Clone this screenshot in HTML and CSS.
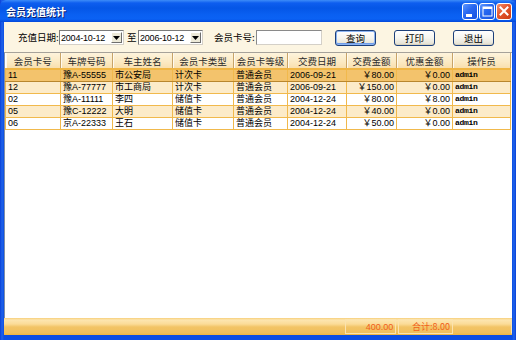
FILE: index.html
```html
<!DOCTYPE html>
<html lang="zh">
<head>
<meta charset="utf-8">
<link rel="stylesheet" href="styles.css">
</head>
<body>
<div class="window">
  <div class="titlebar">
    <span class="title">会员充值统计</span>
    <div class="tbtns">
      <span class="tb"><svg width="14" height="15" viewBox="0 0 14 15"><rect x="3" y="10" width="6" height="3" fill="#fff"/></svg></span>
      <span class="tb"><svg width="14" height="15" viewBox="0 0 14 15"><rect x="3" y="3" width="9" height="9" fill="none" stroke="#fff" stroke-width="1"/><rect x="3" y="3" width="9" height="2" fill="#fff"/></svg></span>
      <span class="tb close"><svg width="14" height="15" viewBox="0 0 14 15"><path d="M3.5 3.5 L10.5 10.5 M10.5 3.5 L3.5 10.5" stroke="#fff" stroke-width="2" stroke-linecap="square"/></svg></span>
    </div>
  </div>
  <div class="client">
    <div class="toolbar">
      <span class="lbl lbl-date">充值日期:</span>
      <div class="combo"><span class="val">2004-10-12</span><span class="drop"><svg width="7" height="4" viewBox="0 0 7 4"><path d="M0 0 H7 L3.5 4 Z" fill="#000"/></svg></span></div>
      <span class="lbl lbl-to">至</span>
      <div class="combo"><span class="val">2006-10-12</span><span class="drop"><svg width="7" height="4" viewBox="0 0 7 4"><path d="M0 0 H7 L3.5 4 Z" fill="#000"/></svg></span></div>
      <span class="lbl lbl-card">会员卡号:</span>
      <div class="input"></div>
      <button class="btn btn-query">查询</button>
      <button class="btn btn-print">打印</button>
      <button class="btn btn-exit">退出</button>
    </div>
    <div class="grid">
      <table>
        <colgroup>
          <col class="c1"><col class="c2"><col class="c3"><col class="c4"><col class="c5"><col class="c6"><col class="c7"><col class="c8"><col class="c9">
        </colgroup>
        <thead>
          <tr><th>会员卡号</th><th>车牌号码</th><th>车主姓名</th><th>会员卡类型</th><th>会员卡等级</th><th>交费日期</th><th>交费金额</th><th>优惠金额</th><th>操作员</th></tr>
        </thead>
        <tbody>
          <tr class="sel"><td>11</td><td>豫A-55555</td><td>市公安局</td><td>计次卡</td><td>普通会员</td><td>2006-09-21</td><td class="num">￥80.00</td><td class="num">￥0.00</td><td class="op">admin</td></tr>
          <tr class="alt"><td>12</td><td>豫A-77777</td><td>市工商局</td><td>计次卡</td><td>普通会员</td><td>2006-09-21</td><td class="num">￥150.00</td><td class="num">￥0.00</td><td class="op">admin</td></tr>
          <tr><td>02</td><td>豫A-11111</td><td>李四</td><td>储值卡</td><td>普通会员</td><td>2004-12-24</td><td class="num">￥80.00</td><td class="num">￥8.00</td><td class="op">admin</td></tr>
          <tr class="alt"><td>05</td><td>豫C-12222</td><td>大明</td><td>储值卡</td><td>普通会员</td><td>2004-12-24</td><td class="num">￥40.00</td><td class="num">￥0.00</td><td class="op">admin</td></tr>
          <tr><td>06</td><td>京A-22333</td><td>王石</td><td>储值卡</td><td>普通会员</td><td>2004-12-24</td><td class="num">￥50.00</td><td class="num">￥0.00</td><td class="op">admin</td></tr>
        </tbody>
      </table>
    </div>
    <div class="status">
      <div class="sp sp-fill"></div>
      <div class="sp sp-sum">400.00</div>
      <div class="sp sp-total">合计:8.00</div>
      <div class="sp sp-end"></div>
    </div>
  </div>
</div>
</body>
</html>
```

FILE: styles.css
```css
html, body {
  margin: 0;
  padding: 0;
  width: 516px;
  height: 340px;
  overflow: hidden;
  background: #fff;
}
.window {
  width: 516px;
  height: 340px;
  display: flex;
  flex-direction: column;
  background: linear-gradient(to right, #0a3fd8 0, #1f63ea 2px, #0c4ee3 4px, #0c4ee3 512px, #1f63ea 514px, #0a3fd8 516px);
  font-family: "Liberation Sans", "Noto Sans CJK SC", sans-serif;
}
.titlebar {
  height: 22px;
  flex: none;
  display: flex;
  align-items: center;
  justify-content: space-between;
  background: linear-gradient(to bottom, #3d8cf8 0, #0e5eef 3px, #0556e6 8px, #0a60f2 15px, #0b62f4 19px, #0550e3 21px, #0446d8 22px);
  border-radius: 6px 6px 0 0;
}
.title {
  margin-left: 6px;
  color: #fff;
  font-family: "Noto Sans CJK SC", sans-serif;
  font-weight: bold;
  font-size: 10px;
  letter-spacing: 0;
  text-shadow: 1px 1px 0 #0a1f70;
}
.tbtns {
  display: flex;
  gap: 1px;
  margin-right: 4px;
  margin-top: 1px;
}
.tb {
  width: 16px;
  height: 17px;
  box-sizing: border-box;
  border: 1px solid #fff;
  border-radius: 3px;
  background: linear-gradient(135deg, #5d97ff 0%, #2767f0 45%, #1751e2 100%);
  display: flex;
  align-items: center;
  justify-content: center;
}
.tb.close {
  background: linear-gradient(135deg, #f4906e 0%, #e4562e 45%, #cc3a12 100%);
}
.client {
  flex: 1;
  margin: 0 4px 5px 4px;
  display: flex;
  flex-direction: column;
  background: #fcf5e2;
}
.toolbar {
  height: 30px;
  flex: none;
  display: flex;
  align-items: flex-start;
  padding-top: 8px;
  box-sizing: border-box;
  font-size: 9.5px;
  color: #000;
}
.lbl {
  font-family: "Noto Sans CJK SC", sans-serif;
  font-size: 9.5px;
  line-height: 15px;
  height: 15px;
}
.lbl-date { margin-left: 14px; width: 41px; }
.lbl-to { margin-left: 3px; width: 11px; }
.lbl-card { margin-left: 11px; width: 42px; }
.combo {
  width: 65px;
  height: 15px;
  box-sizing: border-box;
  border: 1px solid #7b7b7b;
  border-right-color: #d4d0c8;
  border-bottom-color: #d4d0c8;
  background: #fff;
  display: flex;
  align-items: center;
  justify-content: space-between;
}
.combo .val {
  font-size: 9px;
  padding-left: 1px;
  letter-spacing: -0.2px;
}
.drop {
  width: 11px;
  height: 11px;
  margin-right: 1px;
  box-sizing: border-box;
  background: #ece9d8;
  border: 1px solid;
  border-color: #fff #6e6e6e #6e6e6e #fff;
  display: flex;
  align-items: center;
  justify-content: center;
}
.input {
  width: 66px;
  height: 15px;
  box-sizing: border-box;
  border: 1px solid #8a8a8a;
  border-right-color: #d4d0c8;
  border-bottom-color: #d4d0c8;
  background: #fff;
}
.btn {
  width: 41px;
  height: 16px;
  padding: 0;
  box-sizing: border-box;
  border: 1px solid #1c3f7a;
  border-radius: 3px;
  background: linear-gradient(to bottom, #ffffff 0%, #f6f5ef 50%, #e6e3d6 90%, #d6d0c0 100%);
  box-shadow: inset 0 -1px 0 #d8d2bd;
  font-family: "Noto Sans CJK SC", sans-serif;
  font-size: 9.5px;
  line-height: 13px;
  color: #000;
}
.btn-query {
  margin-left: 13px;
  box-shadow: inset 0 0 0 1px #8cb4f2, inset 0 -1px 0 1px #6f9ce8;
}
.btn-print { margin-left: 18px; }
.btn-exit { margin-left: 18px; }
.grid {
  flex: 1;
  background: #fff;
  border-top: 1px solid #a6a29a;
  border-left: 1px solid #7f8ea8;
  overflow: hidden;
}
table {
  border-collapse: collapse;
  table-layout: fixed;
  width: 505px;
  font-size: 9px;
  color: #000;
}
.c1 { width: 55px; }
.c2 { width: 52px; }
.c3 { width: 60px; }
.c4 { width: 61px; }
.c5 { width: 54px; }
.c6 { width: 59px; }
.c7 { width: 50px; }
.c8 { width: 56px; }
.c9 { width: 58px; }
th {
  height: 16px;
  padding: 0;
  box-sizing: border-box;
  font-family: "Noto Sans CJK SC", sans-serif;
  font-weight: normal;
  font-size: 9.5px;
  color: #2a2a2a;
  background: linear-gradient(to bottom, #fdf3dc 0%, #fbe9c2 60%, #f8dfae 100%);
  border-right: 1px solid #c8a468;
  border-bottom: 2px solid #f0b644;
  box-shadow: inset 1px 0 0 #fffaf0;
  white-space: nowrap;
  overflow: hidden;
}
td {
  height: 12px;
  box-sizing: border-box;
  padding: 0 2px;
  line-height: 10px;
  border: 1px solid #f1b94c;
  white-space: nowrap;
  overflow: hidden;
  font-family: "Liberation Sans", "Noto Sans CJK SC", sans-serif;
}
tr.alt td { background: #fcebc9; }
tr.sel td {
  background: #f3c36c;
  border-top: 1px solid #b8862e;
  border-bottom: 1px solid #b8862e;
}
td.num { text-align: right; padding-right: 2px; }
td.op { font-size: 8px; font-family: "Liberation Mono", monospace; font-weight: bold; letter-spacing: -0.3px; }
.status {
  height: 17px;
  flex: none;
  display: flex;
  padding-left: 1px;
  background: linear-gradient(to bottom, #f7cf7a 0, #fde6b0 2px, #fbdc98 6px, #f2c466 9px, #efbf5c 15px, #f0b53c 17px);
}
.sp {
  box-sizing: border-box;
  height: 15px;
  margin-top: 1px;
  font-size: 9px;
  line-height: 14px;
  color: #f0601a;
  text-align: right;
  padding-right: 2px;
  border: 1px solid #fbe3ae;
}
.sp-fill { width: 341px; border-color: transparent; }
.sp-sum { width: 51px; margin-left: 0; }
.sp-total { width: 55px; margin-left: 2px; font-family: "Noto Sans CJK SC", sans-serif; }
.sp-end { width: 58px; margin-left: 1px; border-color: transparent; border-right-color: #fbe3ae; }
```
